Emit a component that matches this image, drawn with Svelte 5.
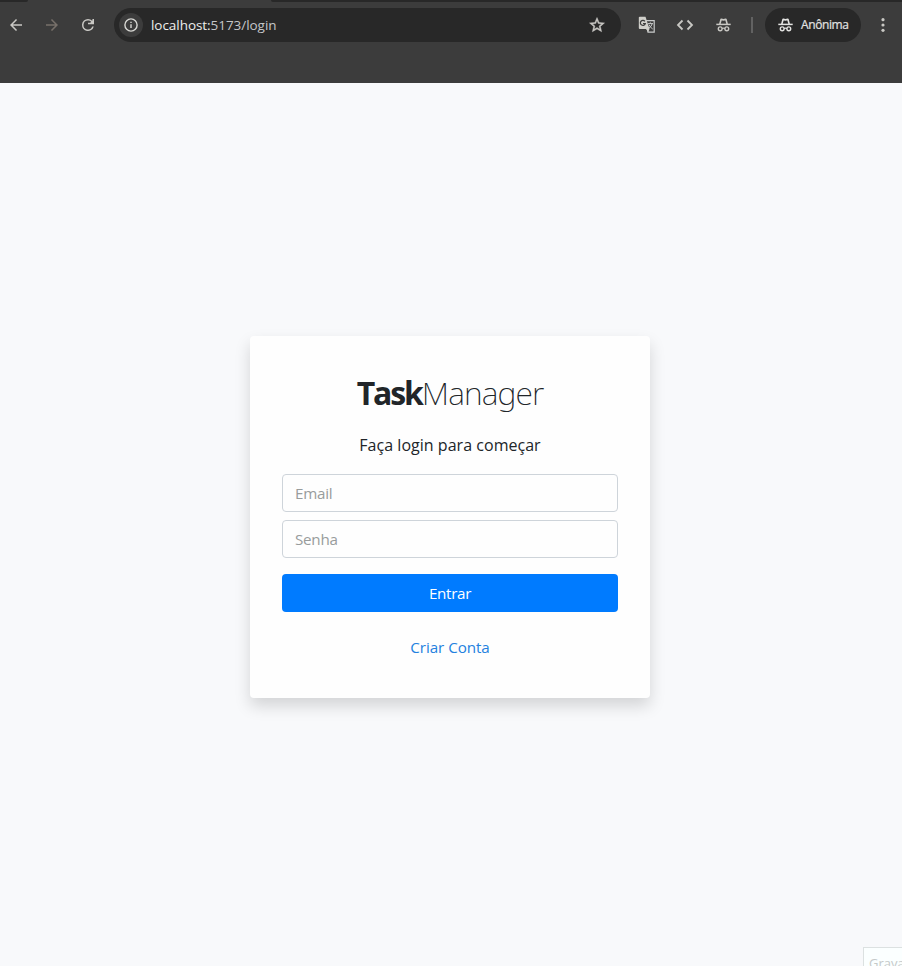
<script>
  let email = $state('');
  let password = $state('');
</script>

{#snippet incognito()}
  <svg class="incognito" viewBox="0 0 15 14" width="15" height="14" fill="none" stroke="currentColor">
    <path d="M.3 6.4H14.7" stroke-width="1.5" />
    <path d="M3.8 6.2 5.1 1.3Q7.5 2.4 9.9 1.3L11.2 6.2" stroke-width="1.6" stroke-linejoin="round" />
    <circle cx="4.2" cy="10.8" r="1.9" stroke-width="1.4" />
    <circle cx="10.8" cy="10.8" r="1.9" stroke-width="1.4" />
    <path d="M6 10.5Q7.5 9.9 9 10.5" stroke-width="1.2" />
  </svg>
{/snippet}

<div class="window">
  <header>
    <div class="tabs"><i class="left"></i><i class="right"></i></div>
    <nav>
      <div class="controls">
        <svg viewBox="0 0 24 24" width="18" height="18"><path fill="currentColor" d="M20 11H7.83l5.59-5.59L12 4l-8 8 8 8 1.41-1.41L7.83 13H20z" /></svg>
        <svg class="dim" viewBox="0 0 24 24" width="18" height="18"><path fill="currentColor" d="M12 4l-1.41 1.41L16.17 11H4v2h12.17l-5.58 5.59L12 20l8-8z" /></svg>
        <svg viewBox="0 0 24 24" width="18" height="18"><path fill="currentColor" d="M17.65 6.35A7.96 7.96 0 0 0 12 4a8 8 0 1 0 7.73 10h-2.08A6 6 0 1 1 12 6c1.66 0 3.14.69 4.22 1.78L15 9h-3v2h8V4h-2z" /></svg>
      </div>
      <div class="address">
        <span class="info">
          <svg viewBox="0 0 14 14" width="14" height="14" fill="none" stroke="currentColor"><circle cx="7" cy="7" r="6.1" stroke-width="1.4" /><path d="M7 6.2V10M7 3.7V5.1" stroke-width="1.4" /></svg>
        </span>
        <span class="url"><b>localhost:</b>5173/login</span>
        <svg class="star" viewBox="0 0 24 24" width="18" height="18"><path fill="currentColor" stroke="currentColor" stroke-width=".6" d="M22 9.24l-7.19-.62L12 2 9.19 8.63 2 9.24l5.46 4.73L5.82 21 12 17.27 18.18 21l-1.63-7.03zM12 15.4l-3.76 2.27 1-4.28-3.32-2.88 4.38-.38L12 6.1l1.71 4.04 4.38.38-3.32 2.88 1 4.28z" /></svg>
      </div>
      <div class="tools">
        <svg viewBox="0 0 18 18" width="18" height="18">
          <path d="M7.5 4.6H16.2V16.2H10z" fill="#3c3c3c" stroke="#c9cbcb" stroke-width="1.2" />
          <path d="M1.8.8H7.5L11.5 13H1.8Q.8 13 .8 12V1.8Q.8.8 1.8.8z" fill="#d0cfca" />
          <path d="M6.9 5.4A2.5 2.5 0 1 0 7.3 7.5H5" fill="none" stroke="#3c3c3c" stroke-width="1.2" />
          <path d="M9.8 7.6H15M12.3 6.4V7.6M14.2 7.7Q13.4 10.7 11 12.2M11 8.6Q12 11.2 14.7 13" fill="none" stroke="#c9cbcb" />
          <path d="M8 13H11.5L10.2 16z" fill="#d0cfca" />
        </svg>
        <svg viewBox="0 0 18 18" width="18" height="18" fill="none" stroke="currentColor" stroke-width="1.8"><path d="M6.5 4.5 2 9 6.5 13.5M11.5 4.5 16 9 11.5 13.5" /></svg>
        <span class="spy">{@render incognito()}</span>
      </div>
      <i class="divider"></i>
      <div class="profile">{@render incognito()}<span>Anônima</span></div>
      <svg class="more" viewBox="0 0 4 14" width="4" height="14" fill="currentColor"><circle cx="2" cy="1.7" r="1.6" /><circle cx="2" cy="7" r="1.6" /><circle cx="2" cy="12.3" r="1.6" /></svg>
    </nav>
  </header>

  <main>
    <form onsubmit={(e) => e.preventDefault()}>
      <h1><strong>Task</strong><span>Manager</span></h1>
      <p>Faça login para começar</p>
      <input type="email" placeholder="Email" aria-label="Email" bind:value={email} />
      <input type="password" placeholder="Senha" aria-label="Senha" bind:value={password} />
      <button>Entrar</button>
      <a href="#conta">Criar Conta</a>
    </form>
  </main>
  <div class="tooltip">Gravar</div>
</div>

<style>
  :global(body) { margin: 0; }
  .window {
    position: relative;
    display: flex;
    flex-direction: column;
    height: 966px;
    overflow: hidden;
    background: #f8f9fb;
    color: #212529;
    font-family: "Open Sans", "Noto Sans", sans-serif;
  }
  .window * { box-sizing: border-box; }
  svg { display: block; flex: none; }
  header { height: 83px; background: #3c3c3c; color: #c9c8c4; }
  .tabs { display: flex; justify-content: space-between; height: 2px; background: #3c3c3c; }
  .tabs .left { width: 28px; background: #282828; border-radius: 0 0 4px 0; }
  .tabs .right { width: 631px; background: #282828; border-radius: 0 0 0 4px; }
  nav { display: flex; align-items: center; height: 46px; padding-left: 7px; }
  .controls { display: flex; gap: 18px; width: 107px; }
  .dim { color: #77706a; }
  .address {
    display: flex;
    align-items: center;
    width: 507px;
    height: 34px;
    padding: 0 15px 0 5px;
    border-radius: 17px;
    background: #282828;
  }
  .info { display: grid; place-items: center; width: 24px; height: 24px; border-radius: 50%; background: #3c3c3c; color: #d8d8d4; }
  .url { margin-left: 8px; font-size: 13.5px; line-height: 20px; letter-spacing: -.05px; color: #c4c6c8; white-space: nowrap; }
  .url b { font-weight: 400; color: #eeeeec; }
  .star { margin-left: auto; }
  .tools { display: flex; align-items: center; gap: 20px; margin-left: 17px; }
  .spy { width: 18px; padding-left: 2px; }
  .divider { width: 2px; height: 16px; margin-left: 19px; background: #626262; }
  .profile {
    display: flex;
    align-items: center;
    gap: 8px;
    width: 96px;
    height: 34px;
    margin-left: 12px;
    padding-left: 13px;
    border-radius: 17px;
    background: #282828;
    color: #e3e3e1;
    font-size: 12px;
    letter-spacing: -.4px;
    -webkit-text-stroke: .2px currentColor;
  }
  .profile span { padding-bottom: 1px; }
  .more { margin-left: 20px; }
  main { display: flex; flex: 1; align-items: center; justify-content: center; padding: 0 2px 15px 0; }
  form {
    display: flex;
    flex-direction: column;
    width: 400px;
    height: 362px;
    padding: 32px;
    border-radius: 4px;
    background: #fefefe;
    box-shadow: 0 8px 16px rgba(0, 0, 0, .15);
    text-align: center;
  }
  h1 { margin: 5px 0 0; font-family: "Noto Sans", "Open Sans", sans-serif; font-size: 32px; line-height: 40px; font-weight: 200; white-space: nowrap; }
  h1 strong { font-family: "Open Sans", sans-serif; font-weight: 700; letter-spacing: -2.1px; }
  h1 span { letter-spacing: -.9px; }
  p { margin: 20px 0 17px; font-size: 16px; line-height: 24px; letter-spacing: .03px; }
  input {
    width: 100%;
    height: 38px;
    margin: 0 0 8px;
    padding: 6px 12px;
    border: 1px solid #ced4da;
    border-radius: 4px;
    background: #fefefe;
    color: #495057;
    font: 15.2px/24px "Open Sans", sans-serif;
    letter-spacing: -.25px;
  }
  input::placeholder { color: #989c9c; opacity: 1; }
  button {
    height: 38px;
    margin-top: 8px;
    padding: 0;
    border: 0;
    border-radius: 4px;
    background: #007bff;
    color: #fff;
    font: 15.2px/24px "Open Sans", sans-serif;
    letter-spacing: -.3px;
  }
  a { align-self: center; margin-top: 23px; color: #2381df; font-size: 15.2px; line-height: 24px; letter-spacing: -.05px; text-decoration: none; }
  .tooltip {
    position: absolute;
    left: 863px;
    top: 947px;
    width: 60px;
    height: 32px;
    padding: 6px 5px;
    border: 1px solid #dce1e1;
    background: #fbffff;
    color: #c5c9c9;
    font-size: 13px;
    line-height: 18px;
  }
</style>
